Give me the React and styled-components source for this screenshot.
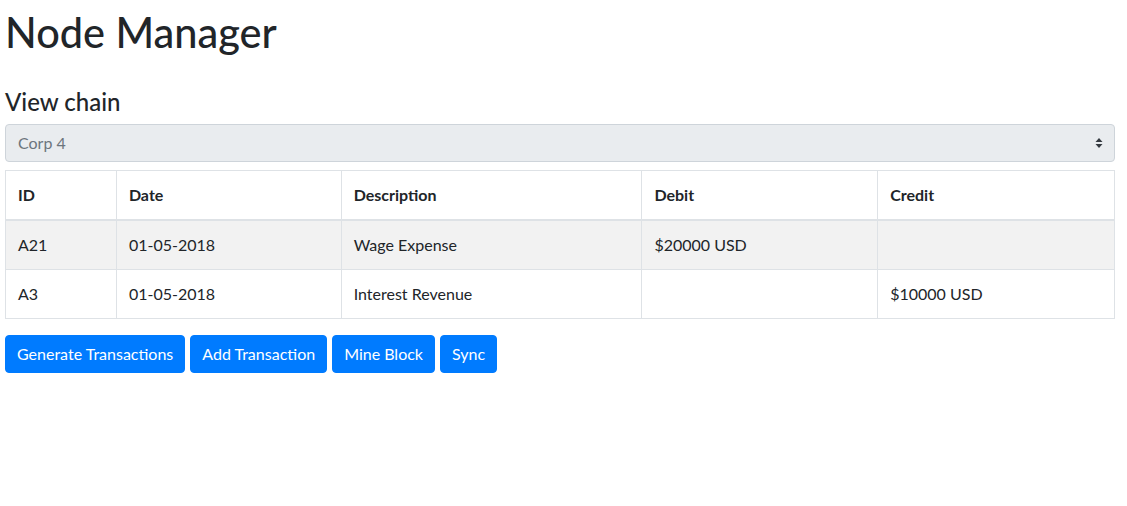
import React from "react";
import styled, { createGlobalStyle } from "styled-components";

const GlobalStyle = createGlobalStyle`
  html, body {
    margin: 0;
    padding: 0;
    background: #fff;
  }
  body {
    font-family: Lato, "Noto Sans", sans-serif;
    font-size: 16px;
    line-height: 1.5;
    color: #212529;
  }
  * {
    box-sizing: border-box;
  }
`;

const Page = styled.div`
  padding: 8px 12px 0 5px;
`;

const Title = styled.h1`
  margin: 0 0 32px;
  font-size: 41.5px;
  font-weight: 500;
  line-height: 48px;
`;

const SubTitle = styled.h4`
  margin: 0 0 7px;
  font-size: 24px;
  font-weight: 500;
  line-height: 1.2;
`;

const SelectWrap = styled.div`
  position: relative;
  margin-bottom: 8px;
`;

const Select = styled.select`
  display: block;
  width: 100%;
  height: 38px;
  padding: 6px 28px 6px 12px;
  font: inherit;
  color: #6c757d;
  background: #e9ecef;
  border: 1px solid #ced4da;
  border-radius: 4px;
  appearance: none;
  opacity: 1;
`;

const Arrows = styled.svg`
  position: absolute;
  right: 12px;
  top: 50%;
  transform: translateY(-50%);
  pointer-events: none;
`;

const Table = styled.table`
  width: 100%;
  border-collapse: collapse;
  margin-bottom: 16px;
  border: 1px solid #dee2e6;
`;

const Th = styled.th`
  text-align: left;
  font-weight: 700;
  padding: 12px;
  border: 1px solid #dee2e6;
  border-bottom-width: 2px;
  width: ${p => p.w};
`;

const Row = styled.tr`
  background: ${p => (p.striped ? "rgba(0, 0, 0, 0.05)" : "transparent")};
`;

const Td = styled.td`
  padding: 12px;
  border: 1px solid #dee2e6;
`;

const Actions = styled.div`
  display: flex;
  gap: 5px;
`;

const Button = styled.button`
  font: inherit;
  color: #fff;
  background: #007bff;
  border: 1px solid #007bff;
  border-radius: 4px;
  padding: 6px 11px;
  line-height: 1.5;
  cursor: pointer;
`;

const columns = [
  { key: "id", label: "ID", w: "111px" },
  { key: "date", label: "Date", w: "225px" },
  { key: "desc", label: "Description", w: "301px" },
  { key: "debit", label: "Debit", w: "236px" },
  { key: "credit", label: "Credit", w: "237px" }
];

const rows = [
  { id: "A21", date: "01-05-2018", desc: "Wage Expense", debit: "$20000 USD", credit: "" },
  { id: "A3", date: "01-05-2018", desc: "Interest Revenue", debit: "", credit: "$10000 USD" }
];

export default function App() {
  return (
    <Page>
      <GlobalStyle />
      <Title>Node Manager</Title>
      <SubTitle>View chain</SubTitle>
      <SelectWrap>
        <Select disabled defaultValue="corp4">
          <option value="corp4">Corp 4</option>
        </Select>
        <Arrows width="8" height="12" viewBox="0 0 8 12">
          <path d="M4 1 L7.5 5 H0.5 Z M4 11 L0.5 7 H7.5 Z" fill="#343a40" />
        </Arrows>
      </SelectWrap>
      <Table>
        <thead>
          <tr>
            {columns.map(c => (
              <Th key={c.key} w={c.w}>
                {c.label}
              </Th>
            ))}
          </tr>
        </thead>
        <tbody>
          {rows.map((r, i) => (
            <Row key={r.id} striped={i % 2 === 0}>
              {columns.map(c => (
                <Td key={c.key}>{r[c.key]}</Td>
              ))}
            </Row>
          ))}
        </tbody>
      </Table>
      <Actions>
        <Button>Generate Transactions</Button>
        <Button>Add Transaction</Button>
        <Button>Mine Block</Button>
        <Button>Sync</Button>
      </Actions>
    </Page>
  );
}
